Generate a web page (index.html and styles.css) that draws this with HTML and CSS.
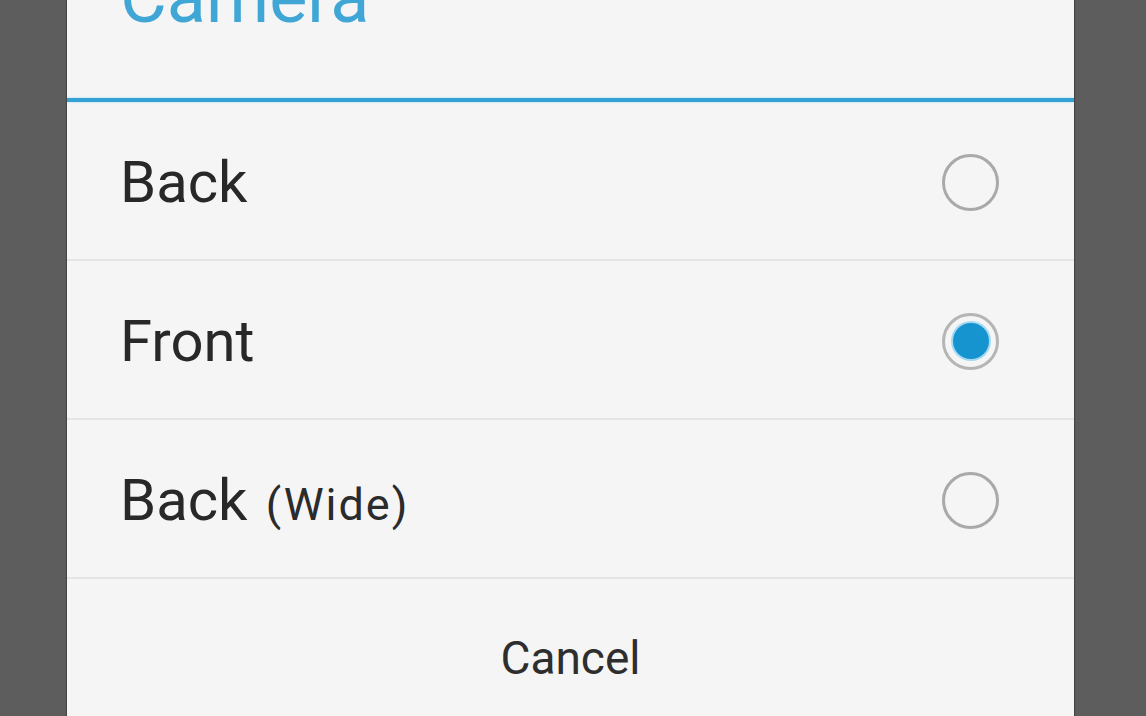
FILE: index.html
```html
<!DOCTYPE html>
<html>
<head>
<meta charset="utf-8">
<link rel="stylesheet" href="styles.css">
</head>
<body>
<div class="dialog">
  <div class="header"><h1 class="title">Camera</h1></div>
  <div class="divider"></div>
  <div class="option">
    <span class="label">Back</span>
    <span class="radio"></span>
  </div>
  <div class="option">
    <span class="label">Front</span>
    <span class="radio checked"><span class="dot"></span></span>
  </div>
  <div class="option">
    <span class="label">Back <span class="sub">(Wide)</span></span>
    <span class="radio"></span>
  </div>
  <div class="actions">
    <span class="cancel">Cancel</span>
  </div>
</div>
</body>
</html>
```

FILE: styles.css
```css
html, body {
  margin: 0;
  padding: 0;
  height: 716px;
  overflow: hidden;
  background: #5d5d5d;
  font-family: Roboto, "Liberation Sans", sans-serif;
}
.dialog {
  width: 1007px;
  margin-left: 67px;
  height: 716px;
  background: #f5f5f5;
  box-shadow: -1px 0 1px rgba(0,0,0,0.25), 1px 0 1px rgba(0,0,0,0.25);
  display: flex;
  flex-direction: column;
  overflow: hidden;
}
.header {
  height: 98px;
  flex: none;
  display: flex;
  align-items: flex-end;
  padding: 0 0 64px 53px;
  box-sizing: border-box;
  overflow: visible;
}
.title {
  margin: 0;
  font-size: 72px;
  line-height: 72px;
  font-weight: 400;
  color: #3fa6d6;
}
.divider {
  height: 4px;
  flex: none;
  background: #35a2d4;
  box-shadow: 0 0 2px rgba(80,190,240,0.6);
}
.option {
  height: 159px;
  flex: none;
  box-sizing: border-box;
  border-bottom: 2px solid #e4e4e4;
  padding: 3px 75px 0 53px;
  display: flex;
  align-items: center;
  justify-content: space-between;
}
.label {
  font-size: 58px;
  color: #282828;
}
.sub {
  font-size: 45px;
  margin-left: 4px;
  letter-spacing: 2px;
  color: #2b2b2b;
}
.radio {
  width: 57px;
  height: 57px;
  box-sizing: border-box;
  border: 3px solid #a9a9a9;
  border-radius: 50%;
  display: flex;
  align-items: center;
  justify-content: center;
}
.radio.checked {
  border-color: #b5b5b5;
}
.dot {
  width: 36px;
  height: 36px;
  border-radius: 50%;
  background: #1594cf;
  box-shadow: 0 0 0 2px rgba(130,205,240,0.7);
}
.actions {
  flex: 1;
  display: flex;
  justify-content: center;
  padding-top: 56px;
}
.cancel {
  font-size: 46px;
  color: #2e2e2e;
  line-height: 1;
}
```
